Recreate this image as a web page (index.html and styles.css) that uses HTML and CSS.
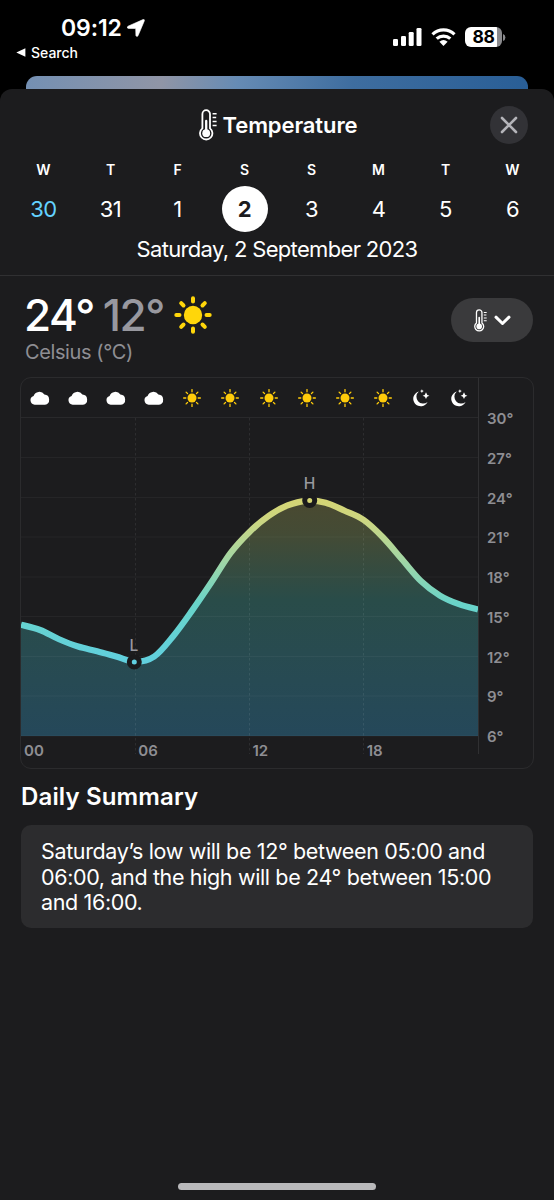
FILE: index.html
```html
<!DOCTYPE html>
<html lang="en">
<head>
  <meta charset="UTF-8">
  <meta name="viewport" content="width=device-width, initial-scale=1.0">
  <title>Temperature</title>
  <link rel="stylesheet" href="styles.css">
</head>
<body>

<svg class="sprite" aria-hidden="true">
  <symbol id="thermometer" viewBox="0 0 18 32">
    <path d="M3.4 19.4V5a3.8 3.8 0 0 1 7.6 0v14.4a6.2 6.2 0 1 1-7.6 0z" fill="none" stroke="#fff" stroke-width="1.8"/>
    <circle cx="7.2" cy="24.2" r="3.9" fill="#fff"/>
    <path d="M7.2 24V12" stroke="#fff" stroke-width="2.3" stroke-linecap="round"/>
    <path d="M13.6 4.7h4M13.6 8.5h3.6M13.6 12.5h4M13.6 16.5h4" stroke="#fff" stroke-width="1.4"/>
  </symbol>
  <symbol id="cloud" viewBox="0 0 20 14">
    <path d="M4.7 13.7A4.4 4.4 0 0 1 3.6 5.1 6 6 0 0 1 14.4 3.6 5.1 5.1 0 0 1 15 13.7z" fill="#fff"/>
  </symbol>
  <symbol id="sun" viewBox="0 0 38 38">
    <circle cx="19" cy="19" r="9.2" fill="#ffd60a"/>
    <path d="M19 2.3v3.2M19 32.5v3.2M2.3 19h3.2M32.5 19h3.2M7.2 7.2l2.3 2.3M28.5 28.5l2.3 2.3M7.2 30.8l2.3-2.3M28.5 9.5l2.3-2.3" stroke="#ffd60a" stroke-width="4" stroke-linecap="round"/>
  </symbol>
  <symbol id="sun-small" viewBox="0 0 18 18">
    <circle cx="9" cy="9" r="4.5" fill="#ffcc0a"/>
    <path d="M9 .6v2.2M9 15.2v2.2M.6 9h2.2M15.2 9h2.2M3.1 3.1l1.4 1.4M13.5 13.5l1.4 1.4M3.1 14.9l1.4-1.4M13.5 4.5l1.4-1.4" stroke="#ffcc0a" stroke-width="1.3" stroke-linecap="round"/>
  </symbol>
  <symbol id="moon" viewBox="0 0 18 18">
    <path d="M6.8 2.6A7.5 7.5 0 1 0 15.6 12.9 6 6 0 0 1 6.8 2.6z" fill="#fff"/>
    <path d="M14 3.3q.5 2.9 3.4 3.4-2.9.5-3.4 3.4-.5-2.9-3.4-3.4 2.9-.5 3.4-3.4zM9.9.2q.3 1.7 1.9 1.9-1.6.3-1.9 1.9-.3-1.6-1.9-1.9 1.6-.2 1.9-1.9z" fill="#fff"/>
  </symbol>
</svg>

<header class="status">
  <div class="status-left">
    <div class="clock">
      <span>09:12</span>
      <svg width="18" height="18" viewBox="0 0 18 18"><path d="M1 7.2 16 .6q1.8-.5 1.3 1.3L11 16.8q-1.3 1.7-2.1-.2L8.7 9.5 1.4 9.4Q-1 8.7 1 7.2z" fill="#fff" stroke="#fff" stroke-width=".6"/></svg>
    </div>
    <div class="back">
      <svg width="10" height="9" viewBox="0 0 10 9"><path d="M.3 4.5 9.4.2v8.6z" fill="#fff"/></svg>
      <span>Search</span>
    </div>
  </div>
  <div class="status-right">
    <svg width="29" height="18" viewBox="0 0 29 18" fill="#fff">
      <rect x="0" y="11" width="5" height="7" rx="1.3"/>
      <rect x="8" y="8" width="5" height="10" rx="1.3"/>
      <rect x="15.7" y="4" width="5" height="14" rx="1.3"/>
      <rect x="23.5" y="0" width="5" height="18" rx="1.3"/>
    </svg>
    <svg class="wifi" width="25" height="18" viewBox="0 0 25 18">
      <path d="M1.5 6.3a16 16 0 0 1 22 0M5.7 10.7a10 10 0 0 1 13.6 0" fill="none" stroke="#fff" stroke-width="3.2"/>
      <path d="M8.4 13.8q4.1-3.4 8.2 0L12.5 18z" fill="#fff"/>
    </svg>
    <div class="battery">88</div>
    <svg class="battery-cap" width="3" height="7" viewBox="0 0 3 7"><path d="M0 0q2.4.8 2.4 3.5T0 7z" fill="#8a8a8d"/></svg>
  </div>
</header>

<div class="behind"></div>

<main class="sheet">
  <div class="title-bar">
    <h1><svg width="18" height="32"><use href="#thermometer"/></svg>Temperature</h1>
    <button class="close" aria-label="Close">
      <svg width="18" height="18" viewBox="0 0 18 18"><path d="M2 2l14 14M16 2 2 16" stroke="#b4b4b9" stroke-width="2.6" stroke-linecap="round"/></svg>
    </button>
  </div>

  <div class="days">
    <div class="day today"><b>W</b><span>30</span></div>
    <div class="day"><b>T</b><span>31</span></div>
    <div class="day"><b>F</b><span>1</span></div>
    <div class="day selected"><b>S</b><span>2</span></div>
    <div class="day"><b>S</b><span>3</span></div>
    <div class="day"><b>M</b><span>4</span></div>
    <div class="day"><b>T</b><span>5</span></div>
    <div class="day"><b>W</b><span>6</span></div>
  </div>
  <div class="date">Saturday, 2 September 2023</div>

  <div class="now">
    <div>
      <div class="temps">
        <span class="high">24°</span>
        <span class="low">12°</span>
        <svg width="38" height="38"><use href="#sun"/></svg>
      </div>
      <div class="unit">Celsius (°C)</div>
    </div>
    <button class="picker" aria-label="Temperature">
      <svg width="13" height="23"><use href="#thermometer"/></svg>
      <svg width="17" height="11" viewBox="0 0 17 11"><path d="M2 2.2l6.5 6.3L15 2.2" fill="none" stroke="#fff" stroke-width="3" stroke-linecap="round" stroke-linejoin="round"/></svg>
    </button>
  </div>

  <section class="chart">
    <div class="plot">
      <div class="conditions">
        <svg class="cloud"><use href="#cloud"/></svg>
        <svg class="cloud"><use href="#cloud"/></svg>
        <svg class="cloud"><use href="#cloud"/></svg>
        <svg class="cloud"><use href="#cloud"/></svg>
        <svg><use href="#sun-small"/></svg>
        <svg><use href="#sun-small"/></svg>
        <svg><use href="#sun-small"/></svg>
        <svg><use href="#sun-small"/></svg>
        <svg><use href="#sun-small"/></svg>
        <svg><use href="#sun-small"/></svg>
        <svg><use href="#moon"/></svg>
        <svg><use href="#moon"/></svg>
      </div>
      <svg class="graph" width="457" height="336" viewBox="0 0 457 336">
        <defs>
          <linearGradient id="line" gradientUnits="userSpaceOnUse" x1="0" y1="80" x2="0" y2="250">
            <stop offset="0" stop-color="#d5d573"/>
            <stop offset=".13" stop-color="#cdd681"/>
            <stop offset=".36" stop-color="#a3d6a4"/>
            <stop offset=".62" stop-color="#69d4c9"/>
            <stop offset="1" stop-color="#60cfe0"/>
          </linearGradient>
          <linearGradient id="area" gradientUnits="userSpaceOnUse" x1="0" y1="80" x2="0" y2="318">
            <stop offset="0" stop-color="#4a4930"/>
            <stop offset=".15" stop-color="#444b35"/>
            <stop offset=".43" stop-color="#294c49"/>
            <stop offset=".65" stop-color="#284b50"/>
            <stop offset="1" stop-color="#25485a"/>
          </linearGradient>
        </defs>
        <path id="fill" fill="url(#area)"/>
        <path d="M0 39.5h457M0 79.5h457M0 119h457M0 159h457M0 198.5h457M0 238.5h457M0 278h457M0 318h457" stroke="#fff" stroke-opacity=".045"/>
        <path d="M114.5 0v336M228.5 0v336M342.5 0v336" stroke="#fff" stroke-opacity=".08" stroke-dasharray="2.5 2.5"/>
        <path id="curve" fill="none" stroke="url(#line)" stroke-width="6.2"/>
        <circle cx="113.3" cy="244" r="5" fill="#60cfe0" stroke="#1a1a1c" stroke-width="5"/>
        <circle cx="288.7" cy="82.5" r="5" fill="#d5d573" stroke="#1a1a1c" stroke-width="5"/>
        <text x="113" y="233">L</text>
        <text x="288.5" y="71">H</text>
      </svg>
      <div class="hours"><span>00</span><span>06</span><span>12</span><span>18</span></div>
    </div>
    <div class="scale">
      <span>30°</span><span>27°</span><span>24°</span><span>21°</span><span>18°</span><span>15°</span><span>12°</span><span>9°</span><span>6°</span>
    </div>
  </section>

  <h2>Daily Summary</h2>
  <p class="summary">Saturday’s low will be 12° between 05:00 and<br>06:00, and the high will be 24° between 15:00<br>and 16:00.</p>

  <div class="home"></div>
</main>

<script>
// hourly temperatures, 00 to 24
const temps = [14.4, 14, 13.3, 12.75, 12.4, 12, 11.6, 12, 13.55, 15.5, 17.6, 19.8, 21.4,
  22.6, 23.4, 23.75, 23.6, 23, 22.3, 21, 19.35, 17.7, 16.6, 15.95, 15.55];

const points = temps.map((t, i) => [i * 457 / 24, (30 - t) * 318 / 24]);

let d = "M" + points[0];
for (let i = 0; i < points.length - 1; i++) {
  const prev = points[i - 1] || points[i];
  const a = points[i];
  const b = points[i + 1];
  const next = points[i + 2] || b;
  d += "C" + [
    a[0] + (b[0] - prev[0]) / 6, a[1] + (b[1] - prev[1]) / 6,
    b[0] - (next[0] - a[0]) / 6, b[1] - (next[1] - a[1]) / 6,
    b[0], b[1]
  ];
}
document.getElementById("curve").setAttribute("d", d);
document.getElementById("fill").setAttribute("d", d + "V318H0Z");
</script>

</body>
</html>
```
FILE: styles.css
```css
* {
  box-sizing: border-box;
}
body {
  margin: 0;
  height: 1200px;
  overflow: hidden;
  background: #000;
  color: #fff;
  font-family: Inter, "Liberation Sans", sans-serif;
}
svg {
  display: block;
}
.sprite {
  position: absolute;
  width: 0;
  height: 0;
}
button {
  border: 0;
  padding: 0;
  display: flex;
  align-items: center;
  justify-content: center;
}

/* status bar */
.status {
  height: 76px;
  display: flex;
  justify-content: space-between;
}
.clock {
  display: flex;
  align-items: center;
  gap: 5px;
  margin: 14px 0 0 61px;
  height: 28px;
  font-size: 23px;
  font-weight: 600;
  letter-spacing: -0.1px;
}
.back {
  display: flex;
  align-items: center;
  gap: 5px;
  margin: 1px 0 0 16px;
  height: 18px;
  font-size: 14px;
  font-weight: 500;
}
.status-right {
  display: flex;
  align-items: center;
  height: 20px;
  margin: 27px 48px 0 0;
}
.wifi {
  margin: 0 9px 0 9px;
}
.battery {
  width: 37px;
  height: 20px;
  border-radius: 6px;
  background: linear-gradient(to right, #fff 32px, #8a8a8d 32px);
  color: #000;
  font-size: 17.5px;
  font-weight: 700;
  line-height: 20px;
  text-align: center;
  letter-spacing: -0.4px;
}
.battery-cap {
  margin-left: 1px;
}

/* sheet */
.behind {
  height: 20px;
  margin: 0 26px;
  border-radius: 11px 11px 0 0;
  background: linear-gradient(100deg, #7490b3, #9095a6 27%, #668bb4 42%, #3e6d9f 65%, #295e96);
}
.sheet {
  position: relative;
  height: 1111px;
  margin-top: -7px;
  border-radius: 12px 12px 0 0;
  background: #1c1c1e;
}
.title-bar {
  height: 72px;
  display: flex;
  justify-content: center;
}
h1 {
  display: flex;
  align-items: center;
  gap: 6px;
  margin: 20px 0 0 2px;
  height: 32px;
  font-size: 22px;
  font-weight: 600;
  letter-spacing: -0.1px;
}
.close {
  position: absolute;
  top: 17px;
  right: 26px;
  width: 38px;
  height: 38px;
  border-radius: 50%;
  background: #323236;
}
.days {
  display: grid;
  grid-template-columns: repeat(8, 67px);
  margin-left: 10px;
}
.day {
  display: flex;
  flex-direction: column;
  align-items: center;
}
.day b {
  height: 17px;
  font-size: 14px;
  font-weight: 600;
  line-height: 17px;
}
.day span {
  width: 46px;
  height: 46px;
  margin-top: 8px;
  border-radius: 50%;
  font-size: 22px;
  line-height: 47px;
  text-align: center;
  letter-spacing: -0.6px;
}
.today span {
  color: #64d2ff;
}
.selected span {
  background: #fff;
  color: #1c1c1e;
  font-weight: 700;
}
.date {
  height: 44px;
  padding-top: 3px;
  border-bottom: 1px solid #303032;
  font-size: 22px;
  line-height: 28px;
  text-align: center;
  letter-spacing: -0.66px;
}

/* current values */
.now {
  display: flex;
  justify-content: space-between;
  height: 101px;
  padding: 15px 21px 0 24px;
}
.temps {
  display: flex;
  align-items: center;
  height: 48px;
  font-size: 44px;
  font-weight: 500;
  letter-spacing: -1.5px;
}
.low {
  margin-left: 9px;
  color: #98989f;
}
.temps svg {
  margin-left: 10px;
}
.unit {
  height: 26px;
  padding-left: 1px;
  color: #8e8e93;
  font-size: 20px;
  line-height: 27px;
  letter-spacing: -0.4px;
}
.picker {
  gap: 7px;
  width: 82px;
  height: 44px;
  margin-top: 7px;
  border-radius: 22px;
  background: #3a3a3c;
}

/* chart */
.chart {
  display: grid;
  grid-template-columns: 458px 1fr;
  width: 514px;
  height: 392px;
  margin-left: 20px;
  border: 1px solid #2b2b2d;
  border-radius: 11px;
}
.plot {
  position: relative;
  height: 376px;
  border-right: 1px solid #303032;
}
.conditions {
  display: grid;
  grid-template-columns: repeat(12, 1fr);
  align-items: center;
  justify-items: center;
  height: 40px;
  border-bottom: 1px solid #29292b;
}
.conditions svg {
  width: 18px;
  height: 18px;
}
.conditions .cloud {
  width: 20px;
  height: 14px;
}
.graph text {
  fill: #98989f;
  font-size: 15.5px;
  font-weight: 500;
  text-anchor: middle;
}
.hours {
  position: absolute;
  left: 0;
  bottom: -4px;
  width: 457px;
  display: grid;
  grid-template-columns: repeat(4, 1fr);
  color: #8e8e93;
  font-size: 15px;
  font-weight: 600;
  line-height: 15px;
}
.hours span {
  padding-left: 3px;
}
.scale {
  padding: 21px 0 0 8px;
  color: #8e8e93;
  font-size: 15px;
  font-weight: 600;
}
.scale span {
  display: block;
  height: 39.75px;
  line-height: 40px;
}

/* summary */
h2 {
  margin: 13px 0 0 21px;
  height: 30px;
  font-size: 24px;
  font-weight: 600;
  line-height: 30px;
  letter-spacing: 0.15px;
}
.summary {
  width: 512px;
  height: 103px;
  margin: 13px 0 0 21px;
  padding: 14px 20px;
  border-radius: 10px;
  background: #2c2c2e;
  font-size: 21.5px;
  line-height: 25.6px;
  letter-spacing: -0.36px;
  white-space: nowrap;
}
.home {
  position: absolute;
  left: 178px;
  bottom: 10px;
  width: 198px;
  height: 7px;
  border-radius: 4px;
  background: #b9b9bb;
}
```
